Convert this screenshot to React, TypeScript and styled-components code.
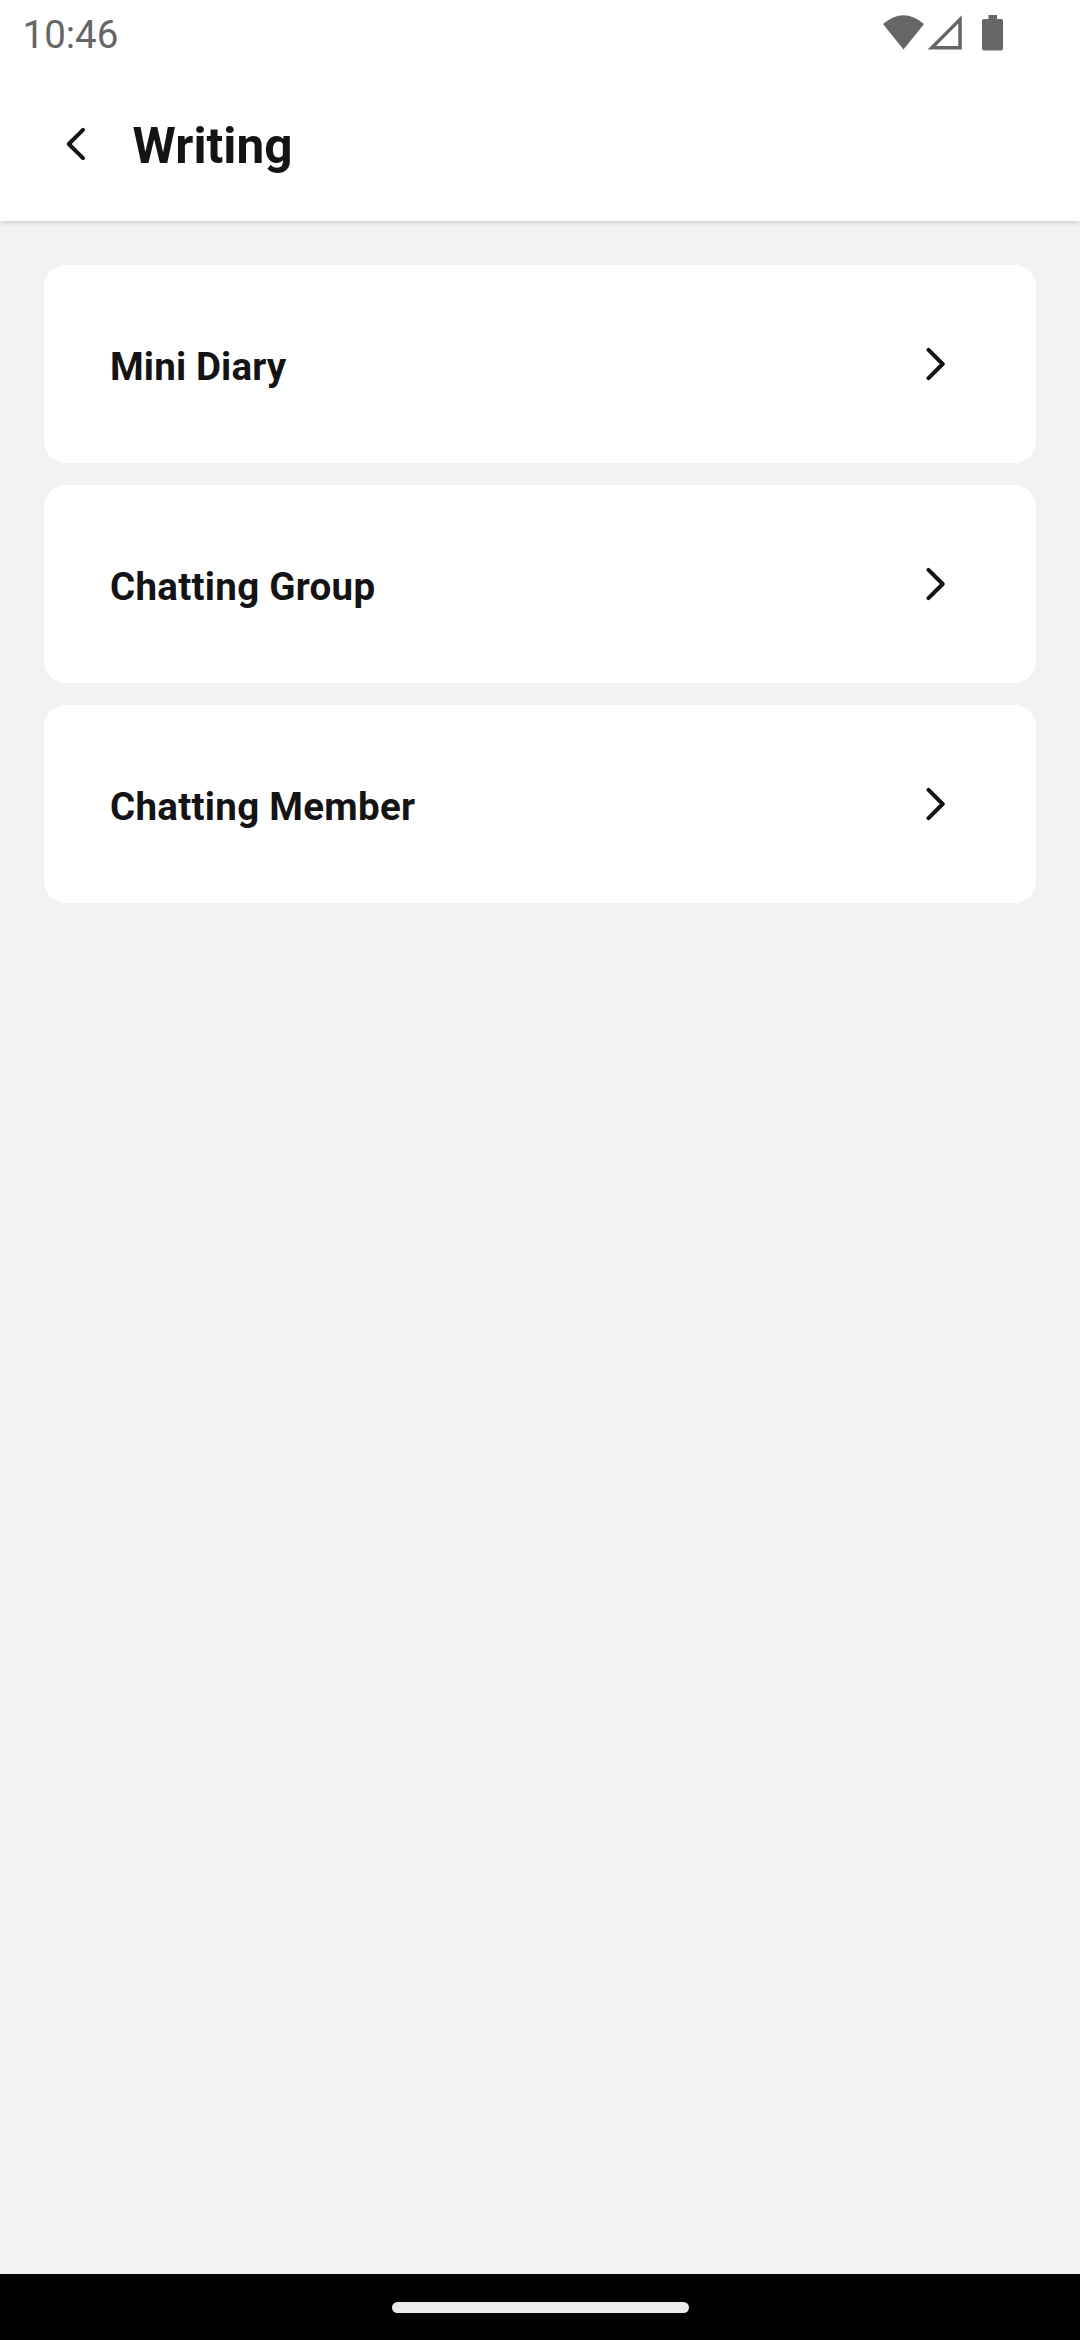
import React from "react";
import styled, { createGlobalStyle } from "styled-components";

const GlobalStyle = createGlobalStyle`
  * { box-sizing: border-box; }
  body { margin: 0; background: #f2f2f2; }
`;

const Screen = styled.div`
  display: flex;
  flex-direction: column;
  width: 1080px;
  height: 2340px;
  background: #f2f2f2;
  font-family: Roboto, "Liberation Sans", sans-serif;
  color: #141416;
`;

const TopArea = styled.div`
  background: #fff;
  height: 221px;
  box-shadow: 0 1px 6px rgba(0, 0, 0, 0.18);
`;

const StatusBar = styled.div`
  display: flex;
  justify-content: space-between;
  height: 66px;
  padding: 0 76px 0 22.5px;
`;

const Clock = styled.span`
  color: #666;
  font-size: 38.5px;
  line-height: 45px;
  padding-top: 12px;
`;

const Header = styled.header`
  display: flex;
  align-items: center;
  height: 155px;
  padding-left: 66px;
`;

const Title = styled.h1`
  margin: 0 0 0 46.5px;
  padding-top: 4px;
  font-size: 49.5px;
  line-height: 58px;
  font-weight: 700;
`;

const Chevron = styled.svg`
  width: 20px;
  height: 34px;
  fill: none;
  stroke: #141416;
  stroke-width: 4;
  stroke-linecap: round;
  stroke-linejoin: round;
`;

const List = styled.main`
  flex: 1;
  display: flex;
  flex-direction: column;
  gap: 22px;
  padding: 44px;
`;

const Row = styled.div`
  display: flex;
  align-items: center;
  justify-content: space-between;
  height: 198px;
  padding: 0 91px 0 66px;
  border-radius: 22px;
  background: #fff;
`;

const Label = styled.span<{ $tracking: number }>`
  font-size: 38.5px;
  line-height: 45px;
  font-weight: 700;
  letter-spacing: ${(p) => p.$tracking}px;
  padding-top: 4px;
`;

const NavBar = styled.footer`
  display: flex;
  align-items: center;
  justify-content: center;
  height: 66px;
  background: #000;
`;

const Handle = styled.div`
  width: 297px;
  height: 11px;
  border-radius: 6px;
  background: #ebebeb;
`;

const items = [
  { label: "Mini Diary", tracking: 0.14 },
  { label: "Chatting Group", tracking: 0.28 },
  { label: "Chatting Member", tracking: 0.28 },
];

export default function App() {
  return (
    <Screen>
      <GlobalStyle />
      <TopArea>
        <StatusBar>
          <Clock>10:46</Clock>
          <svg width="122" height="66" viewBox="882 0 122 66" fill="#666">
            <path d="M883 24Q903.500 6.500 924 24L903.500 49.500Z" />
            <path
              fillRule="evenodd"
              d="M961.800 15.300V49.500H927.600ZM958.300 23.500L936 46H958.300Z"
            />
            <path d="M988.500 15h8.500v4h4q2 0 2 2v27.500q0 2-2 2h-17q-2 0-2-2V21q0-2 2-2h4.500z" />
          </svg>
        </StatusBar>
        <Header>
          <Chevron viewBox="0 0 20 34">
            <path d="M17 2.800L2.800 17L17 31.200" />
          </Chevron>
          <Title>Writing</Title>
        </Header>
      </TopArea>
      <List>
        {items.map((item) => (
          <Row key={item.label}>
            <Label $tracking={item.tracking}>{item.label}</Label>
            <Chevron viewBox="0 0 20 34">
              <path d="M3.500 2.800L17.700 17L3.500 31.200" />
            </Chevron>
          </Row>
        ))}
      </List>
      <NavBar>
        <Handle />
      </NavBar>
    </Screen>
  );
}
